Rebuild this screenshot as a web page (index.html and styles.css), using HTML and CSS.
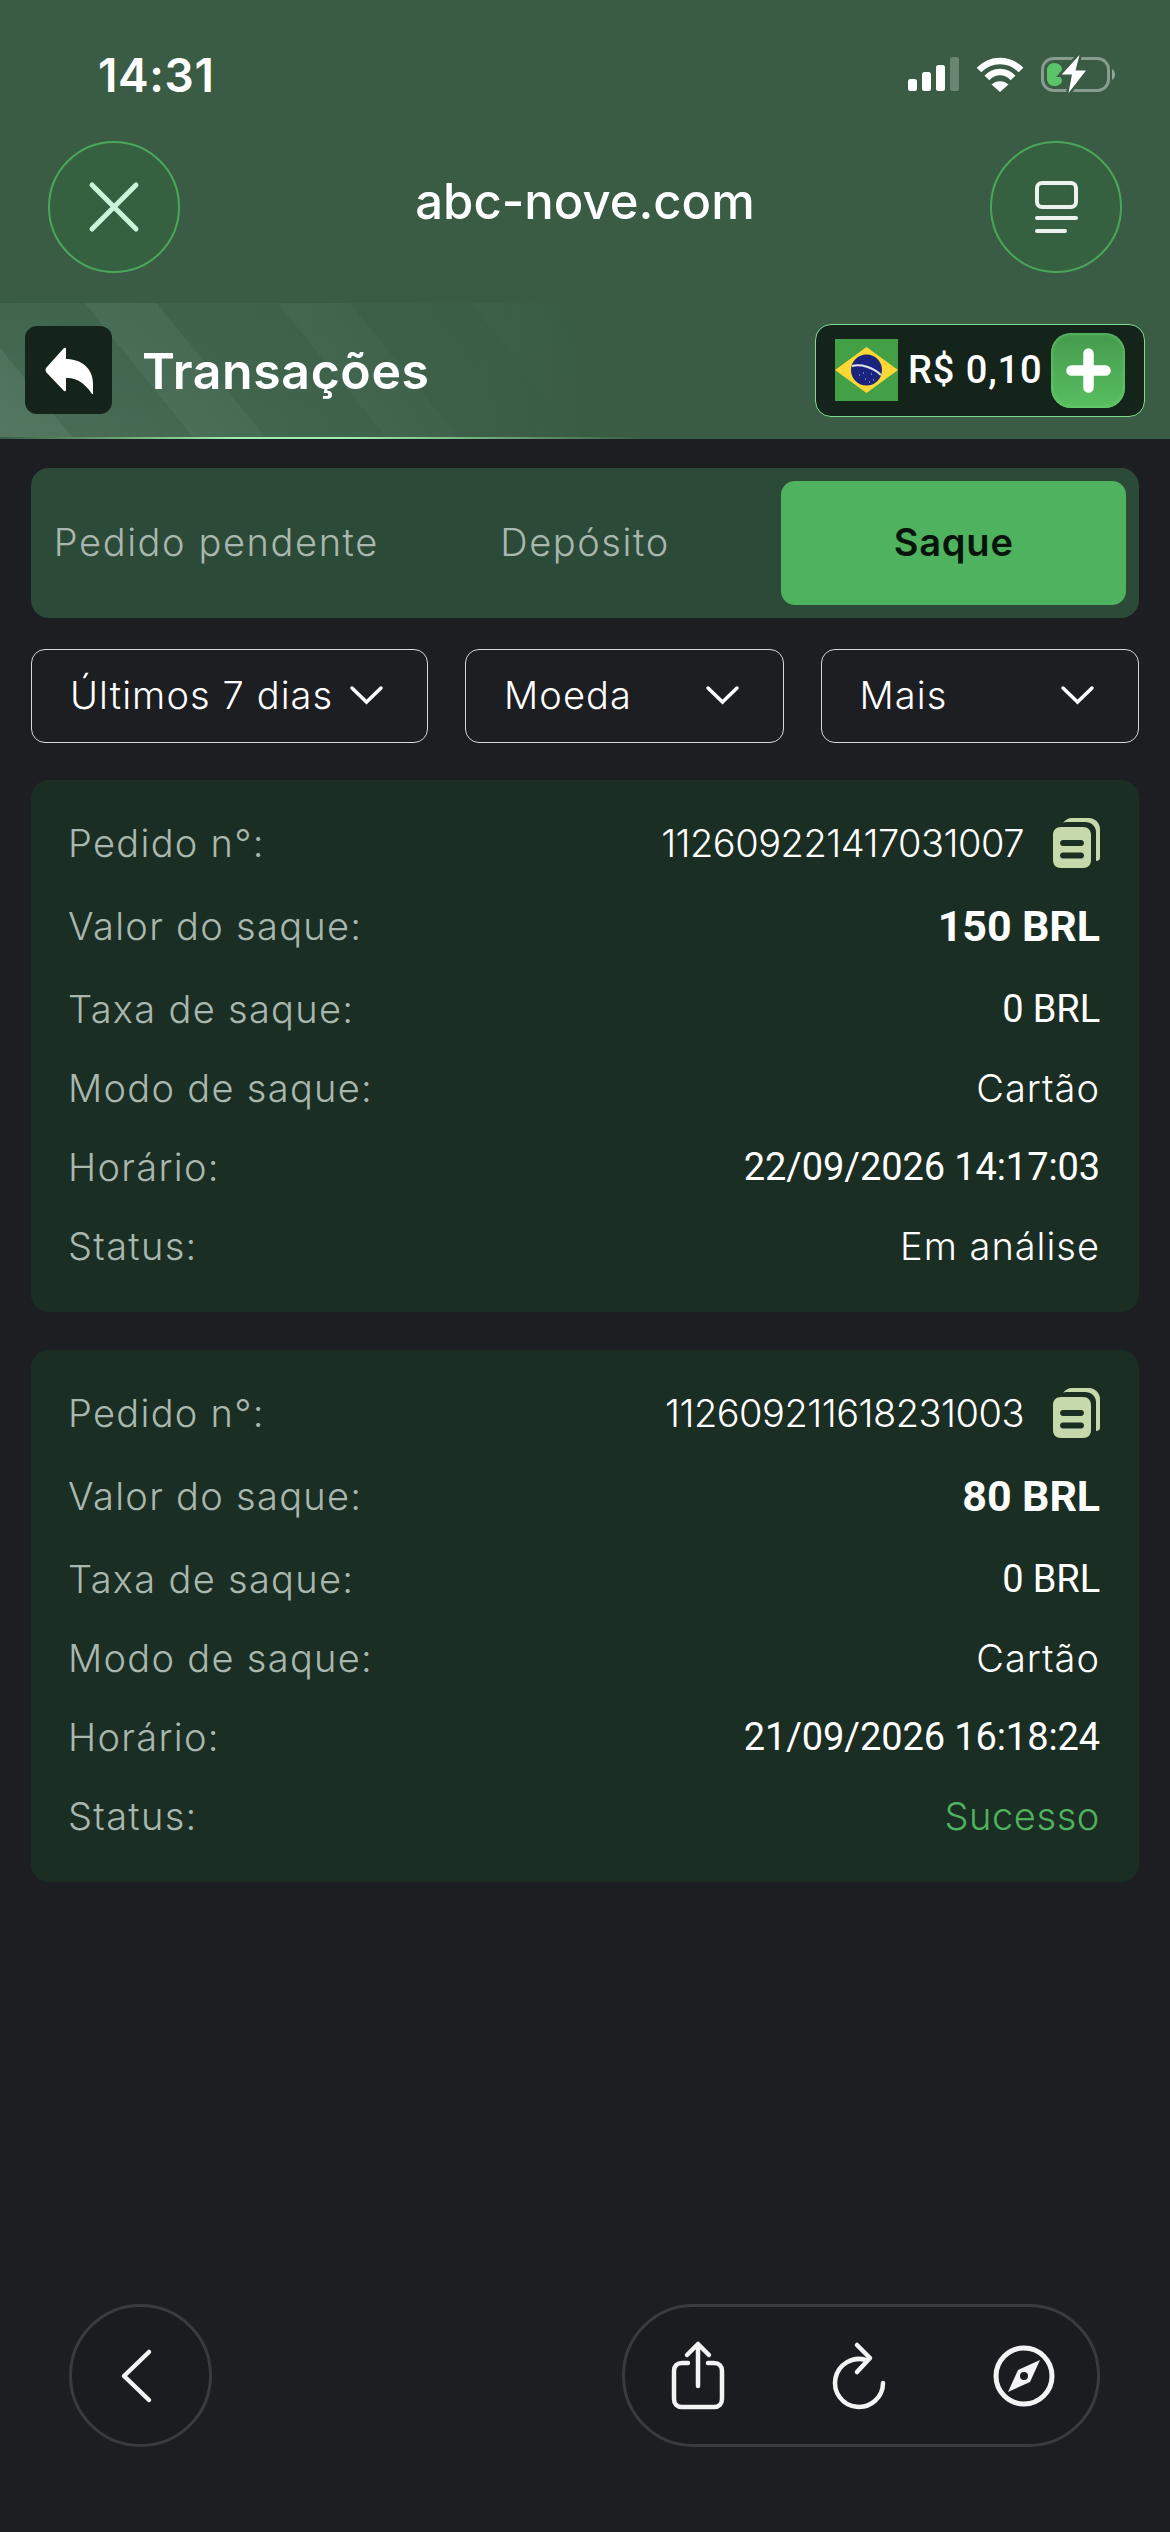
FILE: index.html
```html
<!DOCTYPE html>
<html lang="pt-BR">
<head>
    <meta charset="UTF-8">
    <meta name="viewport" content="width=device-width, initial-scale=1.0">
    <title>Transações</title>
    <link rel="stylesheet" href="styles.css">
</head>
<body>
<div class="app">

    <header class="header">
        <div class="status-bar">
            <span class="time">14:31</span>
            <div class="status-icons">
                <svg width="51" height="35" viewBox="0 0 51 35" fill="#fff">
                    <rect x="0" y="22" width="9" height="12" rx="2.5"/>
                    <rect x="14" y="15" width="9" height="19" rx="2.5"/>
                    <rect x="28" y="8" width="9" height="26" rx="2.5"/>
                    <rect x="42" y="0" width="9" height="34" rx="2.5" fill-opacity=".25"/>
                </svg>
                <svg width="48" height="35" viewBox="0 0 48 35" fill="none" stroke="#fff" stroke-width="6.5">
                    <path d="M3 13 C15 1 33 1 45 13"/>
                    <path d="M11 21 C18 13 30 13 37 21"/>
                    <path d="M24 35 L15.5 27.5 C20 23 28 23 32.5 27.5 Z" fill="#fff" stroke="none"/>
                </svg>
                <svg width="74" height="35" viewBox="0 0 74 35" fill="none">
                    <rect x="1.5" y="1.5" width="66" height="32" rx="11" stroke="#fff" stroke-opacity=".4" stroke-width="3"/>
                    <path d="M71 12 C73 13 74 15 74 17.5 C74 20 73 22 71 23 Z" fill="#fff" fill-opacity=".45"/>
                    <path d="M6 13 C6 9 9 6 13 6 C18 6 21 9 21 12 C21 15 18 15 18 18 C18 20 21 21 21 23 C21 27 17 29 13 29 C9 29 6 26 6 22 Z" fill="#5cc468"/>
                    <path d="M38.500 -2 L20.700 17.500 H31 L27.500 36 L45 13.500 H34.500 Z" fill="#fff" stroke="#3a5c45" stroke-width="5" paint-order="stroke"/>
                </svg>
            </div>
        </div>

        <div class="nav-row">
            <div class="round-btn">
                <svg width="50" height="50" viewBox="0 0 50 50" fill="none" stroke="#c9f5d8" stroke-width="5" stroke-linecap="round">
                    <path d="M3 3 L47 47 M47 3 L3 47"/>
                </svg>
            </div>
            <div class="site-name">abc-nove.com</div>
            <div class="round-btn">
                <svg width="43" height="52" viewBox="0 0 43 52" fill="none" stroke="#eef2ee" stroke-width="4" stroke-linecap="round">
                    <rect x="2" y="2" width="39" height="24" rx="5"/>
                    <path d="M2 37 H41 M2 50 H30"/>
                </svg>
            </div>
        </div>

        <div class="title-row">
            <div class="title-left">
                <div class="back-tile">
                    <svg width="48" height="47" viewBox="0 0 48 47" fill="#fff">
                        <path d="M19 1 L1 21 Q0 23 1 25 L19 44 Q21 45 21 43 V31 C31 30 41 37 47 47 H48 V37 C48 21 36 12 21 12 V2 Q21 0 19 1 Z"/>
                    </svg>
                </div>
                <h1 class="page-title">Transações</h1>
            </div>
            <div class="balance">
                <svg class="flag" width="63" height="62" viewBox="0 0 63 62">
                    <rect width="63" height="62" fill="#43a047"/>
                    <path d="M0 31 L31.5 8 L63 31 L31.5 54 Z" fill="#fdd835"/>
                    <circle cx="31.5" cy="31" r="15.5" fill="#1a237e"/>
                    <path d="M17 27 C26 25 38 28 46 36" fill="none" stroke="#dfe6ee" stroke-width="2"/>
                    <path d="M24 36h1M30 40h1M36 35h1M38 41h1M28 34h1M34 43h1" stroke="#c5cdf0" stroke-width="1"/>
                </svg>
                <span class="balance-value">R$ 0,10</span>
                <div class="plus-btn">
                    <svg width="45" height="45" viewBox="0 0 45 45" fill="none" stroke="#fff" stroke-width="10.5" stroke-linecap="round">
                        <path d="M22.5 5.5 V39.5 M5.5 22.5 H39.5"/>
                    </svg>
                </div>
            </div>
        </div>
    </header>

    <main class="content">
        <div class="tabs">
            <div class="tab">Pedido pendente</div>
            <div class="tab">Depósito</div>
            <div class="tab tab-active">Saque</div>
        </div>

        <div class="filters">
            <div class="filter">
                <span>Últimos 7 dias</span>
                <svg width="33" height="18" viewBox="0 0 33 18" fill="none" stroke="#fff" stroke-width="3.5" stroke-linecap="round"><path d="M2 2 L16.5 16 L31 2"/></svg>
            </div>
            <div class="filter">
                <span>Moeda</span>
                <svg width="33" height="18" viewBox="0 0 33 18" fill="none" stroke="#fff" stroke-width="3.5" stroke-linecap="round"><path d="M2 2 L16.5 16 L31 2"/></svg>
            </div>
            <div class="filter">
                <span>Mais</span>
                <svg width="33" height="18" viewBox="0 0 33 18" fill="none" stroke="#fff" stroke-width="3.5" stroke-linecap="round"><path d="M2 2 L16.5 16 L31 2"/></svg>
            </div>
        </div>

        <section class="card">
            <div class="row row-tall">
                <span class="label">Pedido n°:</span>
                <span class="order-id">
                    <span class="value value-id">112609221417031007</span>
                    <svg width="47" height="50" viewBox="0 0 47 50" fill="#c5d9ab">
                        <path d="M10 5 C12 2 15 0 19 0 H36 C42 0 47 5 47 11 V40 C47 42 45 43 43 43 V14 C43 8 38 4 32 4 H13 C12 4 11 4.500 10 5 Z"/>
                        <path fill-rule="evenodd" d="M8 9 H30 C35 9 38 12 38 17 V42 C38 47 35 50 30 50 H8 C3 50 0 47 0 42 V17 C0 12 3 9 8 9 Z M10 22 C8 22 7 23.500 7 25 C7 26.500 8 28 10 28 H28 C30 28 31 26.500 31 25 C31 23.500 30 22 28 22 Z M10 34.500 C8 34.500 7 36 7 37.500 C7 39 8 40.500 10 40.500 H28 C30 40.500 31 39 31 37.500 C31 36 30 34.500 28 34.500 Z"/>
                    </svg>
                </span>
            </div>
            <div class="row row-tall">
                <span class="label">Valor do saque:</span>
                <span class="num num-bold">150 BRL</span>
            </div>
            <div class="row">
                <span class="label">Taxa de saque:</span>
                <span class="num">0 BRL</span>
            </div>
            <div class="row">
                <span class="label">Modo de saque:</span>
                <span class="value">Cartão</span>
            </div>
            <div class="row">
                <span class="label">Horário:</span>
                <span class="num">22/09/2026 14:17:03</span>
            </div>
            <div class="row">
                <span class="label">Status:</span>
                <span class="value">Em análise</span>
            </div>
        </section>

        <section class="card">
            <div class="row row-tall">
                <span class="label">Pedido n°:</span>
                <span class="order-id">
                    <span class="value value-id">112609211618231003</span>
                    <svg width="47" height="50" viewBox="0 0 47 50" fill="#c5d9ab">
                        <path d="M10 5 C12 2 15 0 19 0 H36 C42 0 47 5 47 11 V40 C47 42 45 43 43 43 V14 C43 8 38 4 32 4 H13 C12 4 11 4.500 10 5 Z"/>
                        <path fill-rule="evenodd" d="M8 9 H30 C35 9 38 12 38 17 V42 C38 47 35 50 30 50 H8 C3 50 0 47 0 42 V17 C0 12 3 9 8 9 Z M10 22 C8 22 7 23.500 7 25 C7 26.500 8 28 10 28 H28 C30 28 31 26.500 31 25 C31 23.500 30 22 28 22 Z M10 34.500 C8 34.500 7 36 7 37.500 C7 39 8 40.500 10 40.500 H28 C30 40.500 31 39 31 37.500 C31 36 30 34.500 28 34.500 Z"/>
                    </svg>
                </span>
            </div>
            <div class="row row-tall">
                <span class="label">Valor do saque:</span>
                <span class="num num-bold">80 BRL</span>
            </div>
            <div class="row">
                <span class="label">Taxa de saque:</span>
                <span class="num">0 BRL</span>
            </div>
            <div class="row">
                <span class="label">Modo de saque:</span>
                <span class="value">Cartão</span>
            </div>
            <div class="row">
                <span class="label">Horário:</span>
                <span class="num">21/09/2026 16:18:24</span>
            </div>
            <div class="row">
                <span class="label">Status:</span>
                <span class="value value-ok">Sucesso</span>
            </div>
        </section>
    </main>

    <footer class="bottom-nav">
        <div class="bottom-back">
            <svg width="31" height="52" viewBox="0 0 31 52" fill="none" stroke="#f4f4f4" stroke-width="4.5" stroke-linecap="round" stroke-linejoin="round">
                <path d="M28 2 L3 26 L28 50"/>
            </svg>
        </div>
        <div class="bottom-pill">
            <svg width="54" height="68" viewBox="0 0 54 68" fill="none" stroke="#f4f4f4" stroke-width="4.5" stroke-linecap="round" stroke-linejoin="round">
                <path d="M17 21 H11 C6 21 3 24 3 29 V57 C3 62 6 65 11 65 H43 C48 65 51 62 51 57 V29 C51 24 48 21 43 21 H37"/>
                <path d="M27 44 V3 M16 13 L27 2 L38 13"/>
            </svg>
            <svg width="53" height="66" viewBox="0 0 53 66" fill="none" stroke="#f4f4f4" stroke-width="4.5" stroke-linecap="round" stroke-linejoin="round">
                <path d="M50 40 A24 24 0 1 1 33 17"/>
                <path d="M24 2 L37 15 L24 29"/>
            </svg>
            <svg width="62" height="62" viewBox="0 0 62 62" fill="none">
                <circle cx="31" cy="31" r="28" stroke="#f4f4f4" stroke-width="5"/>
                <path fill-rule="evenodd" d="M47 15 L37 37 L15 47 L25 25 Z M31 27 A4 4 0 1 0 31 35 A4 4 0 1 0 31 27 Z" fill="#f4f4f4"/>
            </svg>
        </div>
    </footer>

</div>
</body>
</html>
```

FILE: styles.css
```css
* {
    box-sizing: border-box;
}

body {
    margin: 0;
    background: #1c1e22;
    color: #fff;
    font-family: 'Inter', 'Noto Sans', sans-serif;
}

svg {
    display: block;
    flex-shrink: 0;
    overflow: visible;
}

.app {
    display: flex;
    flex-direction: column;
    min-height: 2532px;
}

/* Topo verde */
.header {
    background: #3a5c45;
}

.status-bar {
    height: 141px;
    padding: 57px 55px 0 98px;
    display: flex;
    justify-content: space-between;
    align-items: flex-start;
}

.time {
    font-size: 46px;
    font-weight: 600;
    line-height: 36px;
    letter-spacing: 0.6px;
}

.status-icons {
    display: flex;
    gap: 17px;
}

.nav-row {
    height: 132px;
    padding: 0 48px;
    display: flex;
    justify-content: space-between;
    align-items: center;
}

.round-btn {
    width: 132px;
    height: 132px;
    border-radius: 50%;
    border: 2.5px solid #4aa75a;
    background: #356141;
    display: flex;
    align-items: center;
    justify-content: center;
}

.site-name {
    font-size: 49px;
    font-weight: 500;
    margin-top: -12px;
}

/* Faixas diagonais atras do titulo */
.title-row {
    margin-top: 30px;
    height: 136px;
    padding: 0 25px;
    display: flex;
    justify-content: space-between;
    align-items: center;
    border-bottom: 2px solid;
    border-image: linear-gradient(90deg, #3a5c45 0, #9cf0ac 20%, #9cf0ac 30%, #3a5c45 55%) 1;
    background:
        linear-gradient(90deg, rgba(58, 92, 69, 0) 0, #3a5c45 50%),
        linear-gradient(0deg, rgba(255, 255, 255, 0.05), rgba(255, 255, 255, 0) 90%),
        repeating-linear-gradient(51deg, #4b7059 0, #4b7059 56px, #41664f 56px, #41664f 150px);
}

.title-left {
    display: flex;
    align-items: center;
    gap: 30px;
}

.back-tile {
    width: 87px;
    height: 88px;
    border-radius: 12px;
    background: #14241a;
    display: flex;
    align-items: center;
    justify-content: center;
}

.page-title {
    margin: 2px 0 0;
    font-size: 50px;
    font-weight: 600;
    letter-spacing: 0.6px;
}

.balance {
    width: 330px;
    height: 93px;
    padding: 0 19px;
    border: 1.5px solid #7fdc8f;
    border-radius: 16px;
    background: #14241a;
    display: flex;
    align-items: center;
}

.balance-value {
    margin-left: 10px;
    font-family: 'Roboto', sans-serif;
    font-size: 38px;
    font-weight: 500;
    letter-spacing: 0.9px;
    white-space: nowrap;
}

.plus-btn {
    margin-left: auto;
    width: 74px;
    height: 75px;
    border-radius: 20px;
    background: linear-gradient(180deg, #459a4e, #58bf60);
    box-shadow: inset 0 0 4px #6fd678;
    display: flex;
    align-items: center;
    justify-content: center;
}

/* Conteudo */
.content {
    padding: 29px 31px 0;
}

.tabs {
    height: 150px;
    padding: 13px;
    border-radius: 18px;
    background: #2c4a38;
    display: flex;
    gap: 24px;
}

.tab {
    flex: 1;
    padding-bottom: 2px;
    border-radius: 14px;
    display: flex;
    align-items: center;
    justify-content: center;
    font-size: 38px;
    font-weight: 300;
    letter-spacing: 1.6px;
    color: #a9b8ae;
    white-space: nowrap;
}

.tab-active {
    background: #4fb25e;
    color: #06140b;
    font-weight: 600;
    letter-spacing: 0.8px;
}

.filters {
    margin-top: 31px;
    display: grid;
    grid-template-columns: 397px 1fr 1fr;
    gap: 37px;
}

.filter {
    height: 94px;
    padding: 0 44px 2px 38px;
    border: 1.5px solid #d8d8d8;
    border-radius: 14px;
    display: flex;
    align-items: center;
    justify-content: space-between;
    font-size: 38px;
    font-weight: 300;
    letter-spacing: 1.1px;
    white-space: nowrap;
}

/* Cartoes de pedido */
.card {
    margin-top: 37px;
    padding: 41px 39px 44px 37px;
    border-radius: 18px;
    background: #1b2e24;
}

.card + .card {
    margin-top: 38px;
}

.row {
    height: 44px;
    margin-bottom: 35px;
    display: flex;
    justify-content: space-between;
    align-items: center;
    font-size: 38px;
    white-space: nowrap;
}

.row:last-child {
    margin-bottom: 0;
}

.row-tall {
    margin-bottom: 39px;
}

.label {
    font-weight: 300;
    letter-spacing: 1.3px;
    color: #a9b8ae;
}

.value {
    font-weight: 300;
    letter-spacing: 1px;
    color: #fff;
}

.value-id {
    letter-spacing: -0.5px;
}

.value-ok {
    letter-spacing: 0.6px;
    color: #4fb25e;
}

.num {
    font-family: 'Roboto', sans-serif;
    font-size: 38px;
    font-weight: 400;
    letter-spacing: -0.1px;
}

.num-bold {
    font-size: 43px;
    font-weight: 700;
}

.order-id {
    display: flex;
    align-items: center;
    gap: 29px;
}

/* Barra inferior do navegador */
.bottom-nav {
    margin-top: auto;
    padding: 0 70px 85px 69px;
    display: flex;
    justify-content: space-between;
}

.bottom-back {
    width: 143px;
    height: 143px;
    padding-right: 8px;
    border-radius: 50%;
    border: 3px solid #3a3b3f;
    background: #1a1c1f;
    display: flex;
    align-items: center;
    justify-content: center;
}

.bottom-pill {
    width: 478px;
    height: 143px;
    padding: 0 42px 0 46px;
    border-radius: 72px;
    border: 3px solid #3a3b3f;
    background: #1a1c1f;
    display: flex;
    align-items: center;
    justify-content: space-between;
}
```
